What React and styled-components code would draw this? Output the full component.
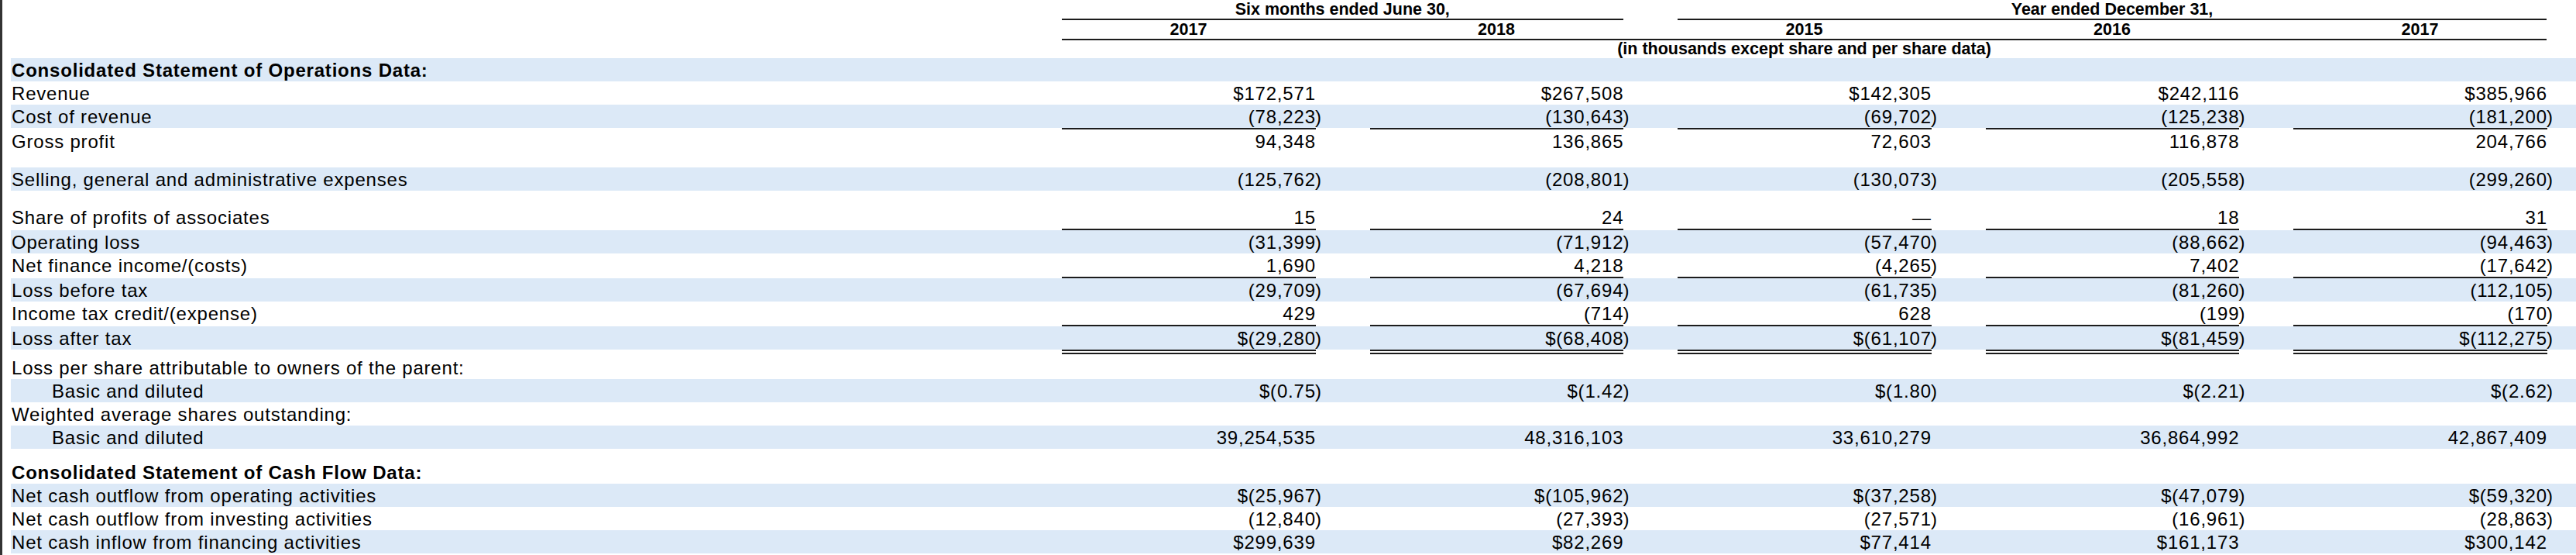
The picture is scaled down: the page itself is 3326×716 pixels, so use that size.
import React from 'react';
import styled, { createGlobalStyle } from 'styled-components';

const GlobalStyle = createGlobalStyle`
  html, body {
    margin: 0;
    padding: 0;
    background: #ffffff;
  }
  body {
    font-family: "Liberation Sans", Arial, Helvetica, sans-serif;
    color: #000;
  }
`;

const BAND = '#dce9f7';
const RULE = '#1c1c1c';
const COLS = '1357px repeat(4, 327px 70.5px) 327px 1fr';

const Page = styled.div`
  width: 3326px;
  height: 716px;
  box-sizing: border-box;
  border-left: 3px solid #333333;
  padding-left: 11px;
  overflow: hidden;
`;

const Table = styled.div`
  display: flex;
  flex-direction: column;
`;

const HeadRow = styled.div`
  display: grid;
  grid-template-columns: ${COLS};
  font-size: 21.5px;
  font-weight: 700;
  line-height: ${(p) => p.$lh}px;
  padding-top: ${(p) => p.$pt || 0}px;
  padding-bottom: ${(p) => p.$pb || 0}px;
`;

const HeadCell = styled.div`
  grid-column: ${(p) => p.$span};
  text-align: center;
  white-space: nowrap;
  border-bottom: ${(p) => (p.$rule ? `2px solid ${RULE}` : 'none')};
`;

const YearsBar = styled.div`
  grid-column: 2 / 11;
  display: grid;
  grid-template-columns: repeat(4, 327px 70.5px) 327px;
  border-bottom: 2px solid ${RULE};
`;

const Year = styled.div`
  grid-column: ${(p) => p.$col};
  text-align: center;
`;

const Row = styled.div`
  display: grid;
  grid-template-columns: ${COLS};
  align-items: start;
  font-size: 24px;
  letter-spacing: 0.8px;
  line-height: 28px;
  margin-top: ${(p) => p.$gap || 0}px;
  background-image: ${(p) =>
    p.$band ? `linear-gradient(${BAND}, ${BAND})` : 'none'};
  background-size: 100% 30px;
  background-repeat: no-repeat;
`;

const Label = styled.div`
  grid-column: 1;
  height: 28px;
  padding-top: 2px;
  padding-left: ${(p) => (p.$indent ? 53 : 1)}px;
  font-weight: ${(p) => (p.$bold ? 700 : 400)};
  white-space: nowrap;
`;

const Amount = styled.div`
  height: 28px;
  padding-top: 2px;
  text-align: right;
  white-space: nowrap;
  margin-right: -0.8px;
  border-bottom: ${(p) =>
    p.$rule === 'single'
      ? `2px solid ${RULE}`
      : p.$rule === 'double'
      ? `6px double ${RULE}`
      : 'none'};
`;

const Paren = styled.div`
  height: 28px;
  padding-top: 2px;
  text-align: left;
  white-space: nowrap;
`;

const rows = [
  { label: 'Consolidated Statement of Operations Data:', bold: true },
  { label: 'Revenue', values: ['$172,571', '$267,508', '$142,305', '$242,116', '$385,966'] },
  { label: 'Cost of revenue', values: ['(78,223)', '(130,643)', '(69,702)', '(125,238)', '(181,200)'], rule: 'single' },
  { label: 'Gross profit', values: ['94,348', '136,865', '72,603', '116,878', '204,766'] },
  { label: 'Selling, general and administrative expenses', values: ['(125,762)', '(208,801)', '(130,073)', '(205,558)', '(299,260)'], gap: 19 },
  { label: 'Share of profits of associates', values: ['15', '24', '\u2014', '18', '31'], rule: 'single', gap: 19 },
  { label: 'Operating loss', values: ['(31,399)', '(71,912)', '(57,470)', '(88,662)', '(94,463)'] },
  { label: 'Net finance income/(costs)', values: ['1,690', '4,218', '(4,265)', '7,402', '(17,642)'], rule: 'single' },
  { label: 'Loss before tax', values: ['(29,709)', '(67,694)', '(61,735)', '(81,260)', '(112,105)'] },
  { label: 'Income tax credit/(expense)', values: ['429', '(714)', '628', '(199)', '(170)'], rule: 'single' },
  { label: 'Loss after tax', values: ['$(29,280)', '$(68,408)', '$(61,107)', '$(81,459)', '$(112,275)'], rule: 'double' },
  { label: 'Loss per share attributable to owners of the parent:', gap: 2 },
  { label: 'Basic and diluted', indent: true, values: ['$(0.75)', '$(1.42)', '$(1.80)', '$(2.21)', '$(2.62)'] },
  { label: 'Weighted average shares outstanding:' },
  { label: 'Basic and diluted', indent: true, values: ['39,254,535', '48,316,103', '33,610,279', '36,864,992', '42,867,409'] },
  { label: 'Consolidated Statement of Cash Flow Data:', bold: true, gap: 15 },
  { label: 'Net cash outflow from operating activities', values: ['$(25,967)', '$(105,962)', '$(37,258)', '$(47,079)', '$(59,320)'] },
  { label: 'Net cash outflow from investing activities', values: ['(12,840)', '(27,393)', '(27,571)', '(16,961)', '(28,863)'] },
  { label: 'Net cash inflow from financing activities', values: ['$299,639', '$82,269', '$77,414', '$161,173', '$300,142'] },
];

const years = ['2017', '2018', '2015', '2016', '2017'];

function ValueCells({ values, rule }) {
  const cells = [];
  for (let i = 0; i < 5; i += 1) {
    const v = values ? values[i] : '';
    const hasParen = v.endsWith(')');
    cells.push(
      <Amount key={`a${i}`} $rule={rule}>
        {hasParen ? v.slice(0, -1) : v}
      </Amount>
    );
    cells.push(<Paren key={`p${i}`}>{hasParen ? ')' : ''}</Paren>);
  }
  return cells;
}

export default function App() {
  return (
    <>
      <GlobalStyle />
      <Page>
        <Table>
          <HeadRow $lh={24}>
            <HeadCell $span="2 / 5" $rule>
              Six months ended June 30,
            </HeadCell>
            <HeadCell $span="6 / 11" $rule>
              Year ended December 31,
            </HeadCell>
          </HeadRow>
          <HeadRow $lh={23} $pt={1}>
            <YearsBar>
              {years.map((y, i) => (
                <Year key={i} $col={i * 2 + 1}>
                  {y}
                </Year>
              ))}
            </YearsBar>
          </HeadRow>
          <HeadRow $lh={22} $pb={1}>
            <HeadCell $span="2 / 11">
              (in thousands except share and per share data)
            </HeadCell>
          </HeadRow>
          {rows.map((r, idx) => (
            <Row key={idx} $band={idx % 2 === 0} $gap={r.gap}>
              <Label $bold={r.bold} $indent={r.indent}>
                {r.label}
              </Label>
              {r.values ? <ValueCells values={r.values} rule={r.rule} /> : null}
            </Row>
          ))}
        </Table>
      </Page>
    </>
  );
}
